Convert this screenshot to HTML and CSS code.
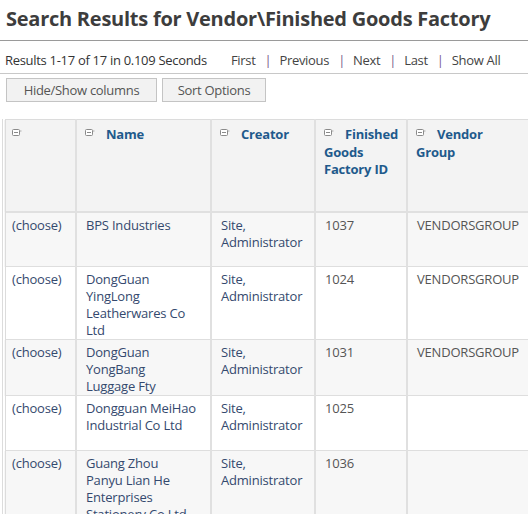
FILE: index.html
```html
<!DOCTYPE html>
<html>
<head>
<meta charset="utf-8">
<link rel="stylesheet" href="styles.css">
</head>
<body>
<div class="page">
  <h1 class="title">Search Results for Vendor\Finished Goods Factory</h1>
  <div class="resbar">
    <span class="count">Results 1-17 of 17 in 0.109 Seconds</span>
    <span class="pager">
      <a>First</a><span class="sep">|</span><a>Previous</a><span class="sep">|</span><a>Next</a><span class="sep">|</span><a>Last</a><span class="sep">|</span><a>Show All</a>
    </span>
  </div>
  <div class="tools">
    <button class="btn btn-cols">Hide/Show columns</button>
    <button class="btn btn-sort">Sort Options</button>
  </div>
  <div class="tablewrap">
    <table class="grid">
      <colgroup>
        <col class="c1"><col class="c2"><col class="c3"><col class="c4"><col class="c5">
      </colgroup>
      <thead>
        <tr>
          <th><span class="ico"><svg width="10" height="8" viewBox="0 0 10 8"><rect x="0.5" y="0.5" width="7" height="6" rx="1" fill="#fff" stroke="#8a8a8a"/><line x1="2" y1="3.5" x2="6" y2="3.5" stroke="#8a8a8a"/><line x1="8" y1="2" x2="9.5" y2="2" stroke="#aaa"/></svg></span></th>
          <th><span class="ico"><svg width="10" height="8" viewBox="0 0 10 8"><rect x="0.5" y="0.5" width="7" height="6" rx="1" fill="#fff" stroke="#8a8a8a"/><line x1="2" y1="3.5" x2="6" y2="3.5" stroke="#8a8a8a"/><line x1="8" y1="2" x2="9.5" y2="2" stroke="#aaa"/></svg></span>Name</th>
          <th><span class="ico"><svg width="10" height="8" viewBox="0 0 10 8"><rect x="0.5" y="0.5" width="7" height="6" rx="1" fill="#fff" stroke="#8a8a8a"/><line x1="2" y1="3.5" x2="6" y2="3.5" stroke="#8a8a8a"/><line x1="8" y1="2" x2="9.5" y2="2" stroke="#aaa"/></svg></span>Creator</th>
          <th><span class="ico"><svg width="10" height="8" viewBox="0 0 10 8"><rect x="0.5" y="0.5" width="7" height="6" rx="1" fill="#fff" stroke="#8a8a8a"/><line x1="2" y1="3.5" x2="6" y2="3.5" stroke="#8a8a8a"/><line x1="8" y1="2" x2="9.5" y2="2" stroke="#aaa"/></svg></span>Finished Goods Factory ID</th>
          <th class="last"><span class="ico"><svg width="10" height="8" viewBox="0 0 10 8"><rect x="0.5" y="0.5" width="7" height="6" rx="1" fill="#fff" stroke="#8a8a8a"/><line x1="2" y1="3.5" x2="6" y2="3.5" stroke="#8a8a8a"/><line x1="8" y1="2" x2="9.5" y2="2" stroke="#aaa"/></svg></span>Vendor Group</th>
        </tr>
      </thead>
      <tbody>
        <tr class="odd">
          <td class="lnk">(choose)</td><td class="lnk name">BPS Industries</td><td class="lnk">Site, Administrator</td><td>1037</td><td>VENDORSGROUP</td>
        </tr>
        <tr>
          <td class="lnk">(choose)</td><td class="lnk name">DongGuan YingLong Leatherwares Co Ltd</td><td class="lnk">Site, Administrator</td><td>1024</td><td>VENDORSGROUP</td>
        </tr>
        <tr class="odd">
          <td class="lnk">(choose)</td><td class="lnk name">DongGuan YongBang Luggage Fty</td><td class="lnk">Site, Administrator</td><td>1031</td><td>VENDORSGROUP</td>
        </tr>
        <tr>
          <td class="lnk">(choose)</td><td class="lnk name"><span class="nw">Dongguan MeiHao</span> Industrial Co Ltd</td><td class="lnk">Site, Administrator</td><td>1025</td><td></td>
        </tr>
        <tr class="odd">
          <td class="lnk">(choose)</td><td class="lnk name">Guang Zhou Panyu Lian He Enterprises Stationery Co Ltd</td><td class="lnk">Site, Administrator</td><td>1036</td><td></td>
        </tr>
      </tbody>
    </table>
  </div>
</div>
</body>
</html>
```

FILE: styles.css
```css
html, body {
  margin: 0;
  padding: 0;
  overflow: hidden;
  background: #fff;
}
body {
  font-family: "Open Sans", "Noto Sans", "Liberation Sans", sans-serif;
  color: #333;
}
.page {
  width: 528px;
  height: 514px;
  overflow: hidden;
}
.title {
  margin: 0;
  height: 40px;
  padding-left: 6px;
  font-size: 20px;
  font-weight: 700;
  line-height: 38px;
  color: #3d3d3d;
  border-bottom: 1px solid #9a9a9a;
  white-space: nowrap;
  letter-spacing: -0.25px;
}
.resbar {
  height: 33px;
  display: flex;
  align-items: center;
  padding-left: 5px;
  padding-top: 6px;
  box-sizing: border-box;
  border-bottom: 1px solid #c8c8c8;
  font-size: 13px;
  white-space: nowrap;
  letter-spacing: -0.3px;
}
.count {
  color: #333;
  margin-right: 24px;
}
.pager a {
  color: #444;
}
.sep {
  color: #7a5a8a;
  margin: 0 8px 0 9px;
}
.tools {
  display: flex;
  gap: 5px;
  padding: 4px 0 0 6px;
  height: 24px;
}
.btn {
  height: 24px;
  margin: 0;
  padding: 0;
  background: #f2f2f2;
  border: 1px solid #c4c4c4;
  border-radius: 0;
  font-family: inherit;
  font-size: 13px;
  color: #555;
  letter-spacing: -0.3px;
}
.btn-cols { width: 151px; }
.btn-sort { width: 104px; }
.tablewrap {
  margin-top: 17px;
  padding-left: 2px;
  width: 700px;
}
.grid {
  border-collapse: collapse;
  table-layout: fixed;
  width: 530px;
  border-left: 4px double #dcdcdc;
  font-size: 13px;
  letter-spacing: -0.2px;
}
.c1 { width: 72px; }
.c2 { width: 135px; }
.c3 { width: 104px; }
.c4 { width: 92px; }
.c5 { width: 127px; }
.grid th, .grid td {
  border-right: 2px solid #e0e0e0;
  text-align: left;
  vertical-align: top;
  box-sizing: border-box;
}
.grid th {
  background: #f3f3f3;
  height: 92px;
  padding: 6px 2px 0 8px;
  color: #1f5a8c;
  font-weight: 700;
  line-height: 17.5px;
  border-top: 1px solid #dcdcdc;
  border-bottom: 2px solid #e0e0e0;
}
.grid th:first-child {
  padding-left: 6px;
}
.grid th.last {
  padding-right: 24px;
}
.ico {
  display: inline-block;
  width: 10px;
  height: 8px;
  margin-right: 11px;
  vertical-align: 2px;
}
.ico svg { display: block; }
.grid td {
  height: 55px;
  padding: 4px 8px 0 9px;
  line-height: 17px;
  color: #555;
  border-bottom: 1px solid #dedede;
}
.grid td:first-child {
  padding-left: 6px;
}
.grid td.name {
  padding-right: 15px;
}
.nw {
  white-space: nowrap;
}
.grid tr.odd td {
  background: #f7f7f7;
}
.grid td.lnk {
  color: #34496e;
}
```
